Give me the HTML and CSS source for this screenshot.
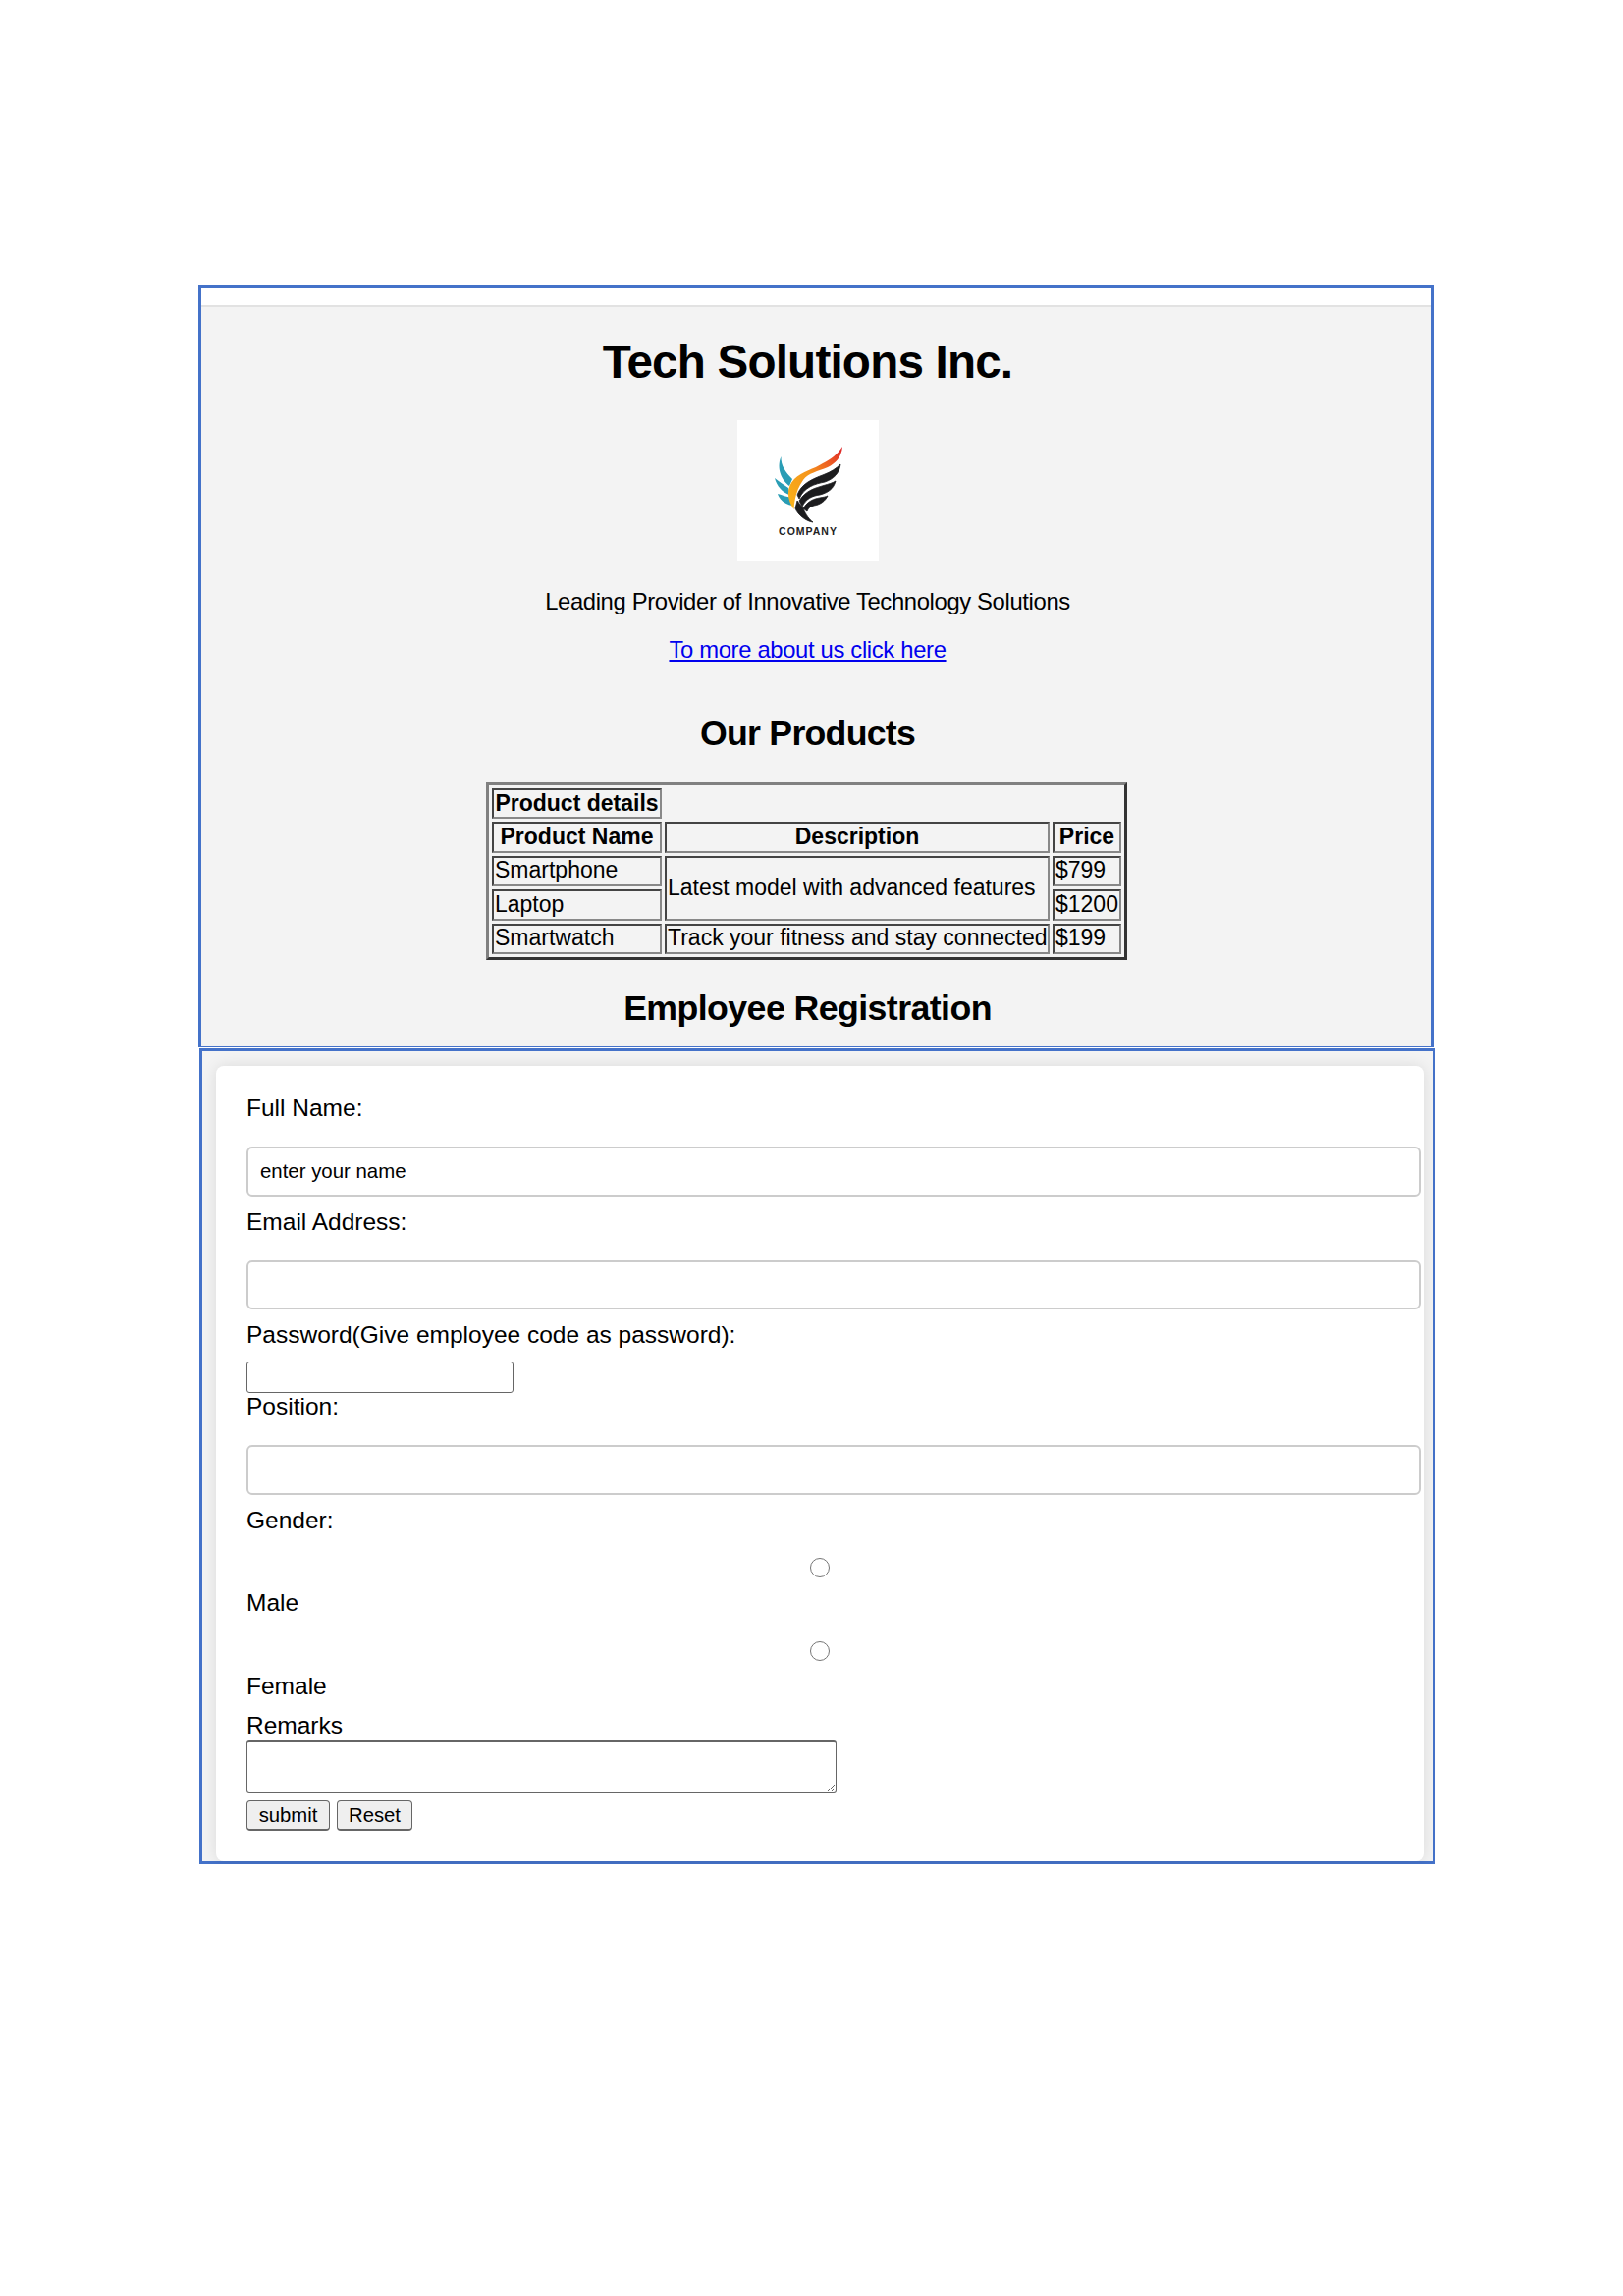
FILE: index.html
```html
<!DOCTYPE html>
<html lang="en">
<head>
    <meta charset="UTF-8">
    <meta name="viewport" content="width=device-width, initial-scale=1.0">
    <title>Tech Solutions Inc.</title>
    <link rel="stylesheet" href="styles.css">
</head>
<body>

<div class="top-box">
    <div class="top-inner">
        <h1>Tech Solutions Inc.</h1>

        <!-- Logo -->
        <svg class="logo" viewBox="0 0 144 144" role="img" aria-label="Company logo">
            <defs>
                <linearGradient id="flame" x1="0.05" y1="0.95" x2="1" y2="0">
                    <stop offset="0" stop-color="#f9b21a"/>
                    <stop offset="0.45" stop-color="#f5961c"/>
                    <stop offset="0.75" stop-color="#ec5a24"/>
                    <stop offset="1" stop-color="#dc2028"/>
                </linearGradient>
            </defs>
            <g fill="#2a9db5">
                <path d="M44.500 37C44 46 49 53 56 60L53 67C46 62 39 50 44.500 37Z"/>
                <path d="M38 59C42 62 47 66 52 69L54 76.500C46 74 40 67 38 59Z"/>
                <path d="M41 75C46 76.500 50 78 54.500 78.500L56 87C50 86 43 82 41 75Z"/>
            </g>
            <path fill="url(#flame)" d="M57.500 91C50 80 50 68 58 60C66 52 78 50 87 44C95 40 102 35 107 27C106 38 100 44 92 48C82 52 72 54 67 61C61 69 58 80 57.500 91Z"/>
            <g fill="#1c1c1e" stroke="#1c1c1e" stroke-width="0.8">
                <path d="M61 76C65 65 76 60 88 55.500C95 53 101 49 105 45C104 54 98 60 89 63C79 65 68 68 63 80Z"/>
                <path d="M63 82C70 71 80 69 88 66.500C93 65 97 64 100 62C98 70 92 74 84 76C76 77 70 80 66 88Z"/>
                <path d="M67 90C72 82 78 80 84 79C87 78.500 90 78 92 77C89 83 84 86 78 87C74 88 72 90 71 93Z"/>
                <path d="M61 82L67 90C70 97 73 101 77 104C70 103 62 97 59 90Z"/>
            </g>
            <text class="logo-text" x="72" y="117" text-anchor="middle">COMPANY</text>
        </svg>

        <p class="tagline">Leading Provider of Innovative Technology Solutions</p>
        <p class="more"><a href="#">To more about us click here</a></p>

        <h2 class="products-title">Our Products</h2>

        <table class="products">
            <colgroup>
                <col class="col-name">
                <col>
                <col class="col-price">
            </colgroup>
            <tr>
                <th>Product details</th>
            </tr>
            <tr>
                <th>Product Name</th>
                <th>Description</th>
                <th>Price</th>
            </tr>
            <tr>
                <td>Smartphone</td>
                <td rowspan="2">Latest model with advanced features</td>
                <td>$799</td>
            </tr>
            <tr>
                <td>Laptop</td>
                <td>$1200</td>
            </tr>
            <tr>
                <td>Smartwatch</td>
                <td>Track your fitness and stay connected</td>
                <td>$199</td>
            </tr>
        </table>

        <h2 class="reg-title">Employee Registration</h2>
    </div>
</div>

<div class="form-box">
    <form class="card">
        <label class="field-label">Full Name:</label>
        <input class="text-input" type="text" value="enter your name">

        <label class="field-label">Email Address:</label>
        <input class="text-input" type="email">

        <label class="field-label pass-label">Password(Give employee code as password):</label>
        <input class="pass-input" type="password">

        <label class="field-label">Position:</label>
        <input class="text-input" type="text">

        <label class="field-label gender-label">Gender:</label>
        <input class="radio" type="radio" name="gender">
        <label class="radio-label">Male</label>
        <input class="radio" type="radio" name="gender">
        <label class="radio-label female-label">Female</label>

        <label class="remarks-label">Remarks</label>
        <textarea class="remarks"></textarea>

        <div class="buttons">
            <button class="btn btn-submit" type="button">submit</button>
            <button class="btn btn-reset" type="button">Reset</button>
        </div>
    </form>
</div>

</body>
</html>
```

FILE: styles.css
```css
body {
    margin: 0;
    padding: 290px 0 0 202px;
    background-color: #fff;
    font-family: "Liberation Sans", Arial, sans-serif;
    font-size: 23.8px;
    line-height: 28px;
    color: #000;
}

/* top section */
.top-box {
    box-sizing: border-box;
    width: 1258px;
    height: 777px;
    padding-top: 18px;
    border: 3px solid #4472c9;
}
.top-inner {
    height: 753px;
    padding-right: 17px;
    border-top: 2px solid #e2e2e2;
    background-color: #f3f3f3;
    text-align: center;
    overflow: hidden;
}
h1 {
    margin: 28px 0 0;
    font-size: 47.6px;
    line-height: 56px;
    letter-spacing: -0.8px;
}
.logo {
    display: block;
    width: 144px;
    height: 144px;
    margin: 31px auto 0;
    background-color: #fff;
}
.logo-text {
    font-family: "Liberation Sans", Arial, sans-serif;
    font-size: 10.5px;
    font-weight: bold;
    letter-spacing: 1px;
    fill: #222;
}
.tagline {
    margin: 27px 0 0;
    letter-spacing: -0.35px;
}
.more {
    margin: 21px 0 0;
    letter-spacing: -0.33px;
}
.more a {
    color: #0000ee;
}
h2 {
    font-size: 35.7px;
    line-height: 42px;
}
.products-title {
    margin: 50px 0 0;
    letter-spacing: -0.75px;
}
.reg-title {
    margin: 28px 0 0;
    letter-spacing: -0.57px;
}

/* products table */
.products {
    width: 653px;
    margin: 29px 0 0 290px;
    border-collapse: separate;
    border-spacing: 3px;
    border: 3px solid;
    border-color: #808080 #333 #333 #808080;
    table-layout: fixed;
    font-size: 23px;
    line-height: 24px;
    text-align: left;
}
.col-name {
    width: 173px;
}
.col-price {
    width: 70px;
}
.products th, .products td {
    box-sizing: border-box;
    height: 31.4px;
    padding: 0 1px 2px;
    border: 2px solid;
    border-color: #444 #888 #888 #444;
    white-space: nowrap;
}
.products th {
    text-align: center;
}

/* registration form */
.form-box {
    box-sizing: border-box;
    width: 1259px;
    height: 831px;
    margin: 1px 0 0 1px;
    padding: 15px 9px 0 14px;
    border: 3px solid #4472c9;
    background-color: #f3f3f3;
    font-size: 24.5px;
}
.card {
    box-sizing: border-box;
    height: 810px;
    padding: 29px 3px 0 31px;
    background-color: #fff;
    border-radius: 8px;
    box-shadow: 0 0 15px rgba(0, 0, 0, 0.1);
}
.field-label {
    display: block;
    margin-bottom: 25px;
}
.text-input {
    display: block;
    box-sizing: border-box;
    width: 100%;
    height: 50.5px;
    margin-bottom: 12px;
    padding: 0 12px;
    border: 2px solid #ccc;
    border-radius: 6px;
    background-color: #fff;
    font-family: "Liberation Sans", Arial, sans-serif;
    font-size: 20.4px;
    color: #000;
}
.pass-label {
    margin-bottom: 13px;
}
.pass-input {
    display: block;
    box-sizing: border-box;
    width: 272px;
    height: 32px;
    padding: 0 3px;
    border: 1px solid #666;
    border-radius: 3px;
    background-color: #fff;
}
.gender-label {
    margin-bottom: 24px;
}
.radio {
    display: block;
    width: 20px;
    height: 20px;
    margin: 0 0 12px 574px;
}
.radio-label {
    display: block;
    margin-bottom: 25px;
}
.female-label {
    margin-bottom: 12px;
}
.remarks-label {
    display: block;
    margin-bottom: 1px;
}
.remarks {
    display: block;
    box-sizing: border-box;
    width: 601px;
    height: 54px;
    margin-bottom: 7px;
    border: 1px solid #666;
    border-top-width: 2px;
    border-radius: 3px;
    background-color: #fff;
}
.buttons {
    display: flex;
    gap: 7px;
}
.btn {
    box-sizing: border-box;
    height: 31px;
    padding: 2px 0 0;
    border: 1px solid #666;
    border-bottom-width: 2px;
    border-radius: 4px;
    background-color: #efefef;
    font-family: "Liberation Sans", Arial, sans-serif;
    font-size: 20.3px;
    color: #000;
}
.btn-submit {
    width: 85px;
}
.btn-reset {
    width: 77px;
}
```
